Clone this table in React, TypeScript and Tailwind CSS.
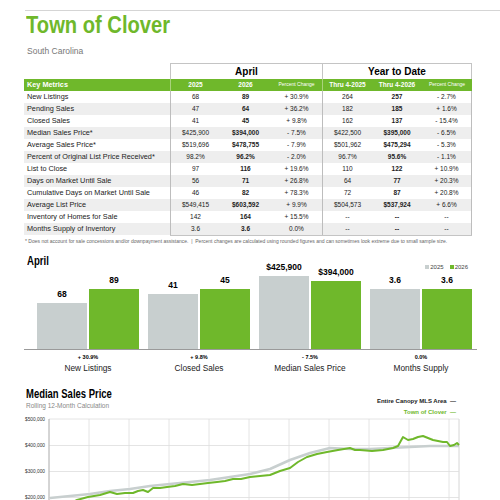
const GREEN = "#6fb82b";

const rows = [
  ["New Listings", "68", "89", "+ 30.9%", "264", "257", "- 2.7%"],
  ["Pending Sales", "47", "64", "+ 36.2%", "182", "185", "+ 1.6%"],
  ["Closed Sales", "41", "45", "+ 9.8%", "162", "137", "- 15.4%"],
  ["Median Sales Price*", "$425,900", "$394,000", "- 7.5%", "$422,500", "$395,000", "- 6.5%"],
  ["Average Sales Price*", "$519,696", "$478,755", "- 7.9%", "$501,962", "$475,294", "- 5.3%"],
  ["Percent of Original List Price Received*", "98.2%", "96.2%", "- 2.0%", "96.7%", "95.6%", "- 1.1%"],
  ["List to Close", "97", "116", "+ 19.6%", "110", "122", "+ 10.9%"],
  ["Days on Market Until Sale", "56", "71", "+ 26.8%", "64", "77", "+ 20.3%"],
  ["Cumulative Days on Market Until Sale", "46", "82", "+ 78.3%", "72", "87", "+ 20.8%"],
  ["Average List Price", "$549,415", "$603,592", "+ 9.9%", "$504,573", "$537,924", "+ 6.6%"],
  ["Inventory of Homes for Sale", "142", "164", "+ 15.5%", "--", "--", "--"],
  ["Months Supply of Inventory", "3.6", "3.6", "0.0%", "--", "--", "--"],
];

const groups = [
  { a: "68", b: "89", ha: 46, hb: 60, pct: "+ 30.9%", name: "New Listings" },
  { a: "41", b: "45", ha: 55, hb: 60, pct: "+ 9.8%", name: "Closed Sales" },
  { a: "$425,900", b: "$394,000", ha: 73, hb: 68, pct: "- 7.5%", name: "Median Sales Price" },
  { a: "3.6", b: "3.6", ha: 60, hb: 60, pct: "0.0%", name: "Months Supply" },
];

const greenLine = [
  [50, 512], [65, 506], [77, 500], [88, 497], [100, 495], [110, 492], [117, 494], [125, 493], [133, 493],
  [138, 491], [143, 490], [148, 492], [153, 488], [160, 488], [167, 487], [175, 486], [183, 484], [192, 485],
  [200, 484], [208, 483], [217, 482], [225, 481], [233, 479], [241, 479], [250, 477], [260, 476], [270, 475],
  [280, 471], [290, 468], [298, 462], [307, 457], [317, 454], [327, 452], [338, 450], [344, 449], [350, 448],
  [355, 450], [360, 450], [372, 451], [383, 450], [393, 448], [398, 446], [403, 437], [408, 440], [413, 439],
  [418, 437], [423, 436], [428, 438], [433, 440], [438, 441], [443, 442], [447, 442], [450, 446], [454, 445],
  [457, 443], [459, 445],
];

const grayLine = [
  [50, 498], [70, 496], [90, 494], [110, 491], [130, 489], [150, 486], [170, 484], [190, 482], [210, 480],
  [230, 477], [250, 474], [270, 469], [290, 460], [310, 453], [330, 448], [350, 449], [370, 449], [390, 448],
  [410, 447], [430, 446], [450, 446], [459, 446],
];

const cols = "grid grid-cols-[146px_50px_51px_51px_50px_50px_50px]";

function Cell({ v, bold, left, right }: { v: string; bold?: boolean; left?: boolean; right?: boolean }) {
  return (
    <div
      className={`flex items-center justify-center text-[6.5px] ${bold ? "font-bold" : ""} ${left ? "border-l border-[#bdbdbd]" : ""} ${right ? "border-r border-[#bdbdbd]" : ""}`}
    >
      {v}
    </div>
  );
}

export default function App() {
  return (
    <div className="w-[500px] h-[500px] overflow-hidden bg-white text-[#222] [font-family:'Liberation_Sans',Arial,sans-serif]">
      <div className="mt-[10px] ml-[25px] h-px bg-[#d5d5d5]" />
      <h1 className="mt-[2px] ml-[26px] w-fit h-[24px] text-[24px] leading-[24px] font-bold text-[#6fb82b] origin-left [transform:scaleX(0.84)] whitespace-nowrap">
        Town of Clover
      </h1>
      <div className="mt-[9px] ml-[27px] h-[10px] text-[8.5px] leading-[10px] text-[#777]">South Carolina</div>

      {/* metrics table */}
      <div className="mt-[7px] ml-[24px] w-[448px]">
        <div className={`${cols} h-[16px]`}>
          <div />
          <div className="col-span-3 flex items-center justify-center border-l border-t border-[#c4c4c4] text-[10px] font-bold text-black">
            April
          </div>
          <div className="col-span-3 flex items-center justify-center border-l border-r border-t border-[#c4c4c4] text-[10px] font-bold text-black">
            Year to Date
          </div>
        </div>
        <div className={`${cols} h-[12px] bg-[#6fb82b] text-white font-bold`}>
          <div className="pl-[3px] flex items-center text-[7.3px]">Key Metrics</div>
          <div className="flex items-center justify-center text-[6.5px] border-l border-[#a9d27c]">2025</div>
          <div className="flex items-center justify-center text-[6.5px]">2026</div>
          <div className="flex items-center justify-center text-[5px] font-normal">Percent Change</div>
          <div className="flex items-center justify-center text-[6.5px] border-l border-[#a9d27c]">Thru 4-2025</div>
          <div className="flex items-center justify-center text-[6.5px]">Thru 4-2026</div>
          <div className="flex items-center justify-center text-[5px] font-normal">Percent Change</div>
        </div>
        {rows.map((r, i) => (
          <div key={r[0]} className={`${cols} h-[12px] ${i % 2 ? "bg-[#eeeeee]" : "bg-white"}`}>
            <div className="pl-[3px] flex items-center text-[7.3px] whitespace-nowrap">{r[0]}</div>
            <Cell v={r[1]} left />
            <Cell v={r[2]} bold />
            <Cell v={r[3]} />
            <Cell v={r[4]} left />
            <Cell v={r[5]} bold />
            <Cell v={r[6]} right />
          </div>
        ))}
        <div className={cols}>
          <div />
          <div className="col-span-6 h-px bg-[#c4c4c4]" />
        </div>
      </div>
      <div className="mt-[2px] ml-[25px] text-[5px] leading-[6px] text-[#666] whitespace-nowrap">
        * Does not account for sale concessions and/or downpayment assistance. &nbsp;| &nbsp;Percent changes are calculated using rounded figures and can sometimes look extreme due to small sample size.
      </div>

      {/* April bar chart */}
      <div className="mt-[11px] ml-[27px] w-[441px] h-[15px] flex justify-between">
        <h2 className="self-start text-[12px] leading-[12px] font-bold text-black origin-left [transform:scaleX(0.8)]">April</h2>
        <div className="self-end flex items-center gap-[6px] text-[6px] leading-[6px] text-[#444]">
          <span className="flex items-center gap-[1px]">
            <span className="w-[4px] h-[4px] bg-[#c8cfcf]" />
            2025
          </span>
          <span className="flex items-center gap-[1px]">
            <span className="w-[4px] h-[4px] bg-[#6fb82b]" />
            2026
          </span>
        </div>
      </div>
      <div className="ml-[37px] w-[435px] h-[79px] grid grid-cols-4 grid-rows-[79px] gap-x-[9px]">
        {groups.map((g) => (
          <div key={g.name} className="grid grid-cols-2 grid-rows-[79px] gap-x-[2px]">
            <div className="flex flex-col items-center justify-end">
              <div className="mb-[4px] text-[8.5px] leading-[9px] font-bold text-black whitespace-nowrap">{g.a}</div>
              <div className="w-full shrink-0 bg-[#c8cfcf]" style={{ height: g.ha }} />
            </div>
            <div className="flex flex-col items-center justify-end">
              <div className="mb-[4px] text-[8.5px] leading-[9px] font-bold text-black whitespace-nowrap">{g.b}</div>
              <div className="w-full shrink-0 bg-[#6fb82b]" style={{ height: g.hb }} />
            </div>
          </div>
        ))}
      </div>
      <div className="ml-[24px] w-[453px] h-px bg-[#9a9a9a]" />
      <div className="ml-[37px] w-[435px] grid grid-cols-4 gap-x-[9px]">
        {groups.map((g) => (
          <div key={g.name} className="flex flex-col items-center">
            <div className="mt-[4px] text-[5.5px] leading-[6px] font-bold text-black">{g.pct}</div>
            <div className="mt-[3px] text-[8.3px] leading-[10px] text-[#222]">{g.name}</div>
          </div>
        ))}
      </div>

      {/* median sales price line chart */}
      <div className="mt-[15px] ml-[26px] w-[430px] h-[27px] flex justify-between items-start">
        <div>
          <h2 className="text-[12px] leading-[12px] font-bold text-black origin-left [transform:scaleX(0.79)] whitespace-nowrap">
            Median Sales Price
          </h2>
          <div className="mt-[1.5px] text-[6.5px] leading-[7px] text-[#888]">Rolling 12-Month Calculation</div>
        </div>
        <div className="mt-[7.5px] flex flex-col items-end text-[6px] leading-[11px] font-bold">
          <div className="text-[#222]">Entire Canopy MLS Area &nbsp;—</div>
          <div className="text-[#6fb82b]">Town of Clover &nbsp;—</div>
        </div>
      </div>
      <svg width="452" height="90" viewBox="24 415 452 90" className="ml-[24px] block">
        {[0, 1, 2, 3, 4, 5, 6, 7, 8, 9, 10].map((k) => (
          <line key={k} x1={49 + k * 40} y1={419} x2={49 + k * 40} y2={505} stroke="#dddddd" strokeWidth="0.8" />
        ))}
        <line x1={459} y1={419} x2={459} y2={505} stroke="#cccccc" strokeWidth="0.8" />
        {[419, 445.5, 471.5, 497.5].map((y, i) => (
          <g key={y}>
            <line x1={49} y1={y} x2={459} y2={y} stroke="#dddddd" strokeWidth="0.8" />
            <text x={45} y={y + 1.6} textAnchor="end" fontSize="4.8" fill="#333" fontFamily="'Liberation Sans', Arial, sans-serif">
              {["$500,000", "$400,000", "$300,000", "$200,000"][i]}
            </text>
          </g>
        ))}
        <line x1={49} y1={419} x2={49} y2={505} stroke="#aaaaaa" strokeWidth="0.8" />
        <polyline points={grayLine.map((p) => p.join(",")).join(" ")} fill="none" stroke="#c8cfcf" strokeWidth="2.6" strokeLinejoin="round" />
        <polyline points={greenLine.map((p) => p.join(",")).join(" ")} fill="none" stroke={GREEN} strokeWidth="2" strokeLinejoin="round" />
      </svg>
    </div>
  );
}
